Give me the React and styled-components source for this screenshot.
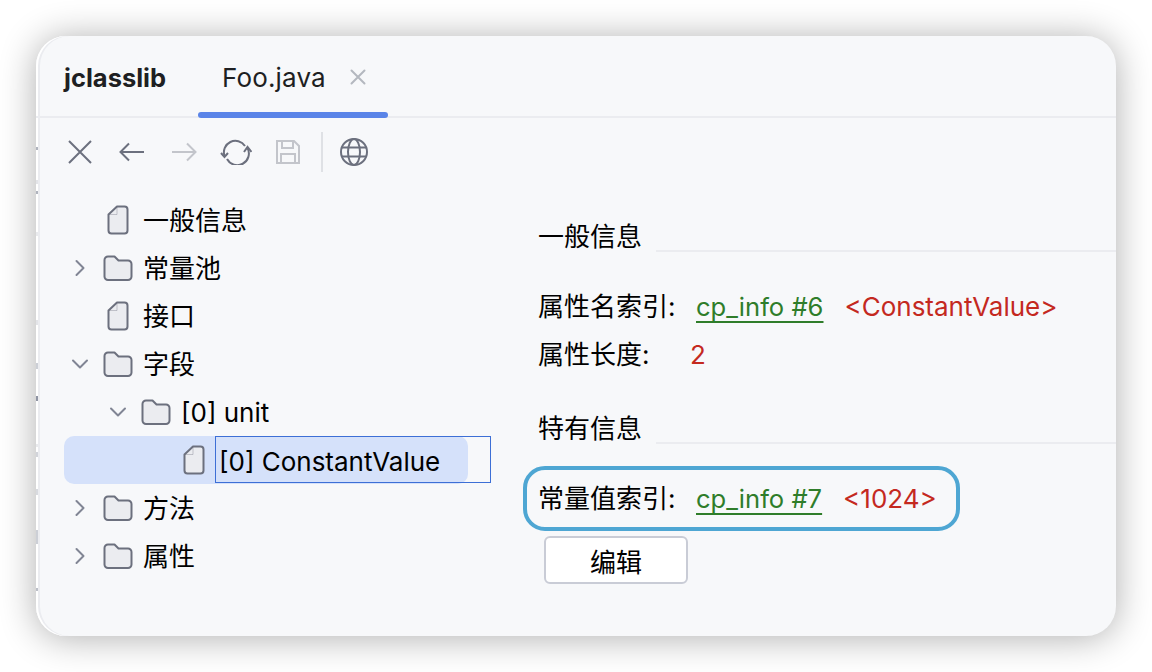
import styled, { createGlobalStyle } from "styled-components";

const GlobalStyle = createGlobalStyle`
  html, body {
    margin: 0;
    padding: 0;
    background: #fff;
  }
  body {
    font-family: Inter, "Noto Sans CJK SC", sans-serif;
    color: #000;
  }
`;

const Page = styled.div`
  width: 1152px;
  height: 672px;
  padding: 36px;
  box-sizing: border-box;
  overflow: hidden;
`;

const Window = styled.div`
  position: relative;
  width: 1080px;
  height: 600px;
  background: #f7f8fa;
  border-radius: 30px;
  box-shadow: inset 2px 0 0 #fff, inset 4px 0 0 #ebecf0, 0 2px 36px rgba(0, 0, 0, 0.32);
  overflow: hidden;
  display: flex;
  flex-direction: column;
`;

// tiny leftovers of the window behind, along the cropped left edge
const EdgeMark = styled.div`
  position: absolute;
  left: 0;
  width: 2px;
  background: #8f94a3;
  opacity: ${(p) => p.$alpha};
`;

const TabBar = styled.div`
  height: 82px;
  box-sizing: border-box;
  border-bottom: 2px solid #ebecf0;
  display: flex;
  align-items: stretch;
  padding-left: 28px;
`;

const AppName = styled.div`
  font-size: 25.5px;
  font-weight: 700;
  color: #1e1f22;
  width: 134px;
  padding-top: 2px;
  display: flex;
  align-items: center;
`;

const Tab = styled.div`
  position: relative;
  width: 190px;
  box-sizing: border-box;
  padding: 2px 0 0 24px;
  display: flex;
  align-items: center;
  gap: 24px;
  font-size: 26px;
  letter-spacing: 0.15px;
  color: #1e1f22;
  &::after {
    content: "";
    position: absolute;
    left: 0;
    right: 0;
    bottom: -2px;
    height: 6px;
    border-radius: 3px;
    background: #5a84e8;
  }
`;

const Toolbar = styled.div`
  height: 70px;
  box-sizing: border-box;
  display: flex;
  align-items: center;
  padding: 0 0 2px 30px;
`;

const ToolIcon = styled.svg`
  width: 28px;
  height: 28px;
  margin-right: 24px;
  flex: none;
  fill: none;
  stroke: ${(p) => (p.$off ? "#c3c5cb" : "#6c707e")};
  stroke-width: 2;
`;

const RefreshIcon = styled(ToolIcon)`
  width: 32px;
  height: 26px;
  margin: 0 22px 0 -2px;
`;

const ToolDivider = styled.div`
  width: 2px;
  height: 40px;
  background: #dfe1e5;
  margin: 0 17px 0 -5px;
`;

const Body = styled.div`
  flex: 1;
  display: flex;
  min-height: 0;
`;

const Tree = styled.div`
  width: 502px;
  flex: none;
  box-sizing: border-box;
  padding: 8px 0 0 28px;
`;

const Row = styled.div`
  width: 404px;
  height: 48px;
  display: flex;
  align-items: center;
  box-sizing: border-box;
  padding-left: ${(p) => p.$level * 38}px;
  border-radius: ${(p) => (p.$selected ? "10px" : "0")};
  background: ${(p) => (p.$selected ? "#d5e1fa" : "transparent")};
`;

const ArrowSlot = styled.div`
  width: 32px;
  height: 32px;
  flex: none;
  display: flex;
  align-items: center;
  justify-content: center;
  margin-right: 6px;
`;

const IconSlot = styled.div`
  width: 32px;
  height: 32px;
  flex: none;
  display: flex;
  align-items: center;
  justify-content: center;
  margin-right: 9px;
`;

const Label = styled.span`
  font-size: 26px;
  line-height: 32px;
  padding-top: 2px;
  white-space: nowrap;
`;

const EditLabel = styled.div`
  flex: none;
  width: 276px;
  height: 47px;
  align-self: flex-start;
  box-sizing: border-box;
  margin-left: -4px;
  border: 1px solid #3d6fd6;
  padding: 3px 0 0 3px;
  display: flex;
  align-items: center;
  font-size: 26px;
  white-space: nowrap;
`;

const Detail = styled.div`
  flex: 1;
  min-width: 0;
  padding-top: 31px;
`;

const SectionHead = styled.div`
  display: flex;
  align-items: flex-end;
  height: 36px;
  margin-top: ${(p) => p.$top}px;
  margin-bottom: ${(p) => p.$gap}px;
`;

const SectionTitle = styled.span`
  font-size: 26px;
  line-height: 36px;
  width: 118px;
  flex: none;
`;

const SectionRule = styled.div`
  flex: 1;
  height: 2px;
  background: #ebecf0;
  margin-bottom: 3px;
`;

const Field = styled.div`
  height: 48px;
  display: flex;
  align-items: baseline;
  line-height: 46px;
  font-size: 26px;
  white-space: nowrap;
`;

const FieldName = styled.span`
  width: ${(p) => p.$w}px;
  flex: none;
`;

const Link = styled.span`
  color: #2f7d2a;
  font-size: 25.6px;
  text-decoration: underline;
  text-decoration-thickness: 2px;
  text-underline-offset: 5px;
  text-decoration-skip-ink: none;
  margin-right: 21px;
`;

const Value = styled.span`
  color: #c4291f;
`;

const Highlight = styled.div`
  width: 437px;
  height: 65px;
  box-sizing: border-box;
  margin: 19px 0 5px -15px;
  padding-left: 11px;
  border: 4px solid #4ea6d3;
  border-radius: 22px;
  display: flex;
  align-items: baseline;
  line-height: 57px;
  font-size: 26px;
  white-space: nowrap;
`;

const EditButton = styled.button`
  display: block;
  width: 144px;
  height: 48px;
  margin-left: 6px;
  background: #fff;
  border: 2px solid #c9ccd6;
  border-radius: 6px;
  font-family: Inter, "Noto Sans CJK SC", sans-serif;
  font-size: 26px;
  color: #000;
  padding: 0;
`;

const Stroke = styled.svg`
  flex: none;
  fill: none;
  stroke: ${(p) => p.$color || "#6c707e"};
  stroke-width: 2;
  stroke-linecap: round;
  stroke-linejoin: round;
`;

const Chevron = ({ open }) => (
  <Stroke width="18" height="18" viewBox="0 0 18 18" $color="#818594">
    <path d={open ? "M2 5.5l7 7 7-7" : "M5.5 2l7 7-7 7"} />
  </Stroke>
);

const Folder = () => (
  <svg width="30" height="26" viewBox="0 0 30 26">
    <path
      d="M1.5 5A3.5 3.5 0 0 1 5 1.5h6.5l4 4H25A3.5 3.5 0 0 1 28.500 9v12.500A3.500 3.500 0 0 1 25 25H5a3.500 3.500 0 0 1-3.500-3.500z"
      fill="#ebecf0"
      stroke="#6c707e"
      strokeWidth="2"
      strokeLinejoin="round"
    />
  </svg>
);

const File = () => (
  <svg width="22" height="30" viewBox="0 0 22 30">
    <path
      d="M10 1.500h7.500a3 3 0 0 1 3 3v21a3 3 0 0 1-3 3h-13a3 3 0 0 1-3-3V9.500z"
      fill="#ebecf0"
      stroke="#6c707e"
      strokeWidth="2"
      strokeLinejoin="round"
    />
    <path d="M10 2v7.500H2" fill="none" stroke="#6c707e" strokeWidth="1" opacity="0.35" />
  </svg>
);

const items = [
  { level: 0, type: "file", text: "一般信息" },
  { level: 0, type: "folder", text: "常量池" },
  { level: 0, type: "file", text: "接口" },
  { level: 0, type: "folder", open: true, text: "字段" },
  { level: 1, type: "folder", open: true, text: "[0] unit" },
  { level: 2, type: "file", editing: true, text: "[0] ConstantValue" },
  { level: 0, type: "folder", text: "方法" },
  { level: 0, type: "folder", text: "属性" },
];

const edgeMarks = [
  { top: 111, h: 3, alpha: 0.7 },
  { top: 144, h: 4, alpha: 0.25 },
  { top: 155, h: 3, alpha: 0.7 },
  { top: 196, h: 4, alpha: 0.2 },
  { top: 284, h: 5, alpha: 0.25 },
  { top: 327, h: 6, alpha: 0.45 },
  { top: 360, h: 5, alpha: 1 },
  { top: 408, h: 3, alpha: 0.2 },
  { top: 416, h: 5, alpha: 0.4 },
  { top: 453, h: 6, alpha: 0.35 },
  { top: 494, h: 14, alpha: 0.45 },
  { top: 552, h: 3, alpha: 0.6 },
];

export default function App() {
  return (
    <Page>
      <GlobalStyle />
      <Window>
        {edgeMarks.map((m) => (
          <EdgeMark key={m.top} $alpha={m.alpha} style={{ top: m.top, height: m.h }} />
        ))}
        <TabBar>
          <AppName>jclasslib</AppName>
          <Tab>
            Foo.java
            <Stroke width="16" height="16" viewBox="0 0 16 16" $color="#b4b8bf">
              <path d="M1.500 1.500l13 13M14.500 1.500l-13 13" />
            </Stroke>
          </Tab>
        </TabBar>
        <Toolbar>
          <ToolIcon viewBox="0 0 28 28">
            <path d="M3 3l22 22M25 3L3 25" />
          </ToolIcon>
          <ToolIcon viewBox="0 0 28 28">
            <path d="M26 14H3M11 5.500L2.500 14l8.500 8.500" />
          </ToolIcon>
          <ToolIcon viewBox="0 0 28 28" $off>
            <path d="M2 14h23M17 5.500l8.500 8.500-8.500 8.500" />
          </ToolIcon>
          <RefreshIcon viewBox="0 0 32 26">
            <path d="M4.500 17A11.500 11.500 0 0 1 25 7M27.500 9A11.500 11.500 0 0 1 7 20" />
            <path d="M1 14l3.500 4L8 14M24 13l3.500-5 4 5" />
          </RefreshIcon>
          <ToolIcon viewBox="0 0 28 28" $off>
            <path d="M3 3h17l5 5v17H3zM8 3v7h11V3M7 25v-9h14v9" />
          </ToolIcon>
          <ToolDivider />
          <ToolIcon viewBox="0 0 28 28">
            <circle cx="14" cy="14" r="13" />
            <ellipse cx="14" cy="14" rx="6" ry="13" />
            <path d="M2 9.500h24M2 18.500h24" />
          </ToolIcon>
        </Toolbar>
        <Body>
          <Tree>
            {items.map((item) => (
              <Row key={item.text} $level={item.level} $selected={item.editing}>
                <ArrowSlot>
                  {item.type === "folder" && <Chevron open={item.open} />}
                </ArrowSlot>
                <IconSlot>{item.type === "folder" ? <Folder /> : <File />}</IconSlot>
                {item.editing ? (
                  <EditLabel>{item.text}</EditLabel>
                ) : (
                  <Label>{item.text}</Label>
                )}
              </Row>
            ))}
          </Tree>
          <Detail>
            <SectionHead $top={0} $gap={29}>
              <SectionTitle>一般信息</SectionTitle>
              <SectionRule />
            </SectionHead>
            <Field>
              <FieldName $w={158}>属性名索引:</FieldName>
              <Link>cp_info #6</Link>
              <Value>&lt;ConstantValue&gt;</Value>
            </Field>
            <Field>
              <FieldName $w={152}>属性长度:</FieldName>
              <Value>2</Value>
            </Field>
            <SectionHead $top={31} $gap={0}>
              <SectionTitle>特有信息</SectionTitle>
              <SectionRule />
            </SectionHead>
            <Highlight>
              <FieldName $w={158}>常量值索引:</FieldName>
              <Link>cp_info #7</Link>
              <Value>&lt;1024&gt;</Value>
            </Highlight>
            <EditButton>编辑</EditButton>
          </Detail>
        </Body>
      </Window>
    </Page>
  );
}
